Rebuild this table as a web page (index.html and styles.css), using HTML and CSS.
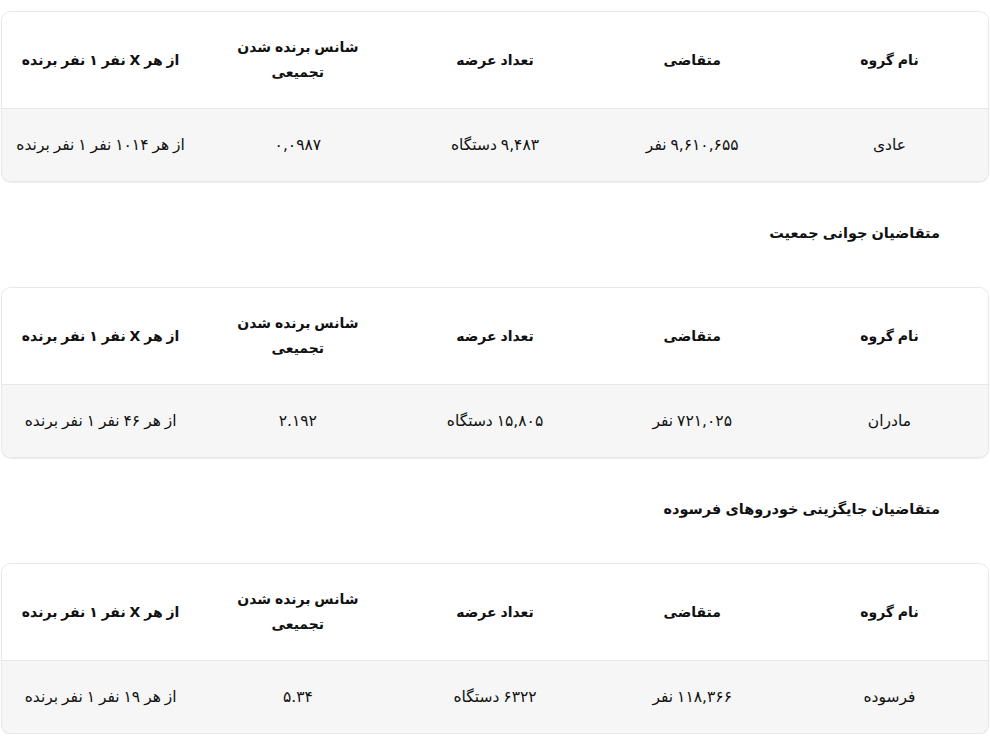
FILE: index.html
```html
<!DOCTYPE html>
<html lang="fa" dir="rtl">
<head>
<meta charset="utf-8">
<title>جدول شانس برنده شدن</title>
<link rel="stylesheet" href="styles.css">
</head>
<body>
<main class="page">
  <div class="card">
    <table class="tbl">
      <thead>
        <tr>
          <th>نام گروه</th>
          <th>متقاضی</th>
          <th>تعداد عرضه</th>
          <th>شانس برنده شدن<br>تجمیعی</th>
          <th>از هر X نفر ۱ نفر برنده</th>
        </tr>
      </thead>
      <tbody>
        <tr>
          <td>عادی</td>
          <td>۹,۶۱۰,۶۵۵ نفر</td>
          <td>۹,۴۸۳ دستگاه</td>
          <td>۰,۰۹۸۷</td>
          <td>از هر ۱۰۱۴ نفر ۱ نفر برنده</td>
        </tr>
      </tbody>
    </table>
  </div>

  <h3 class="section-title">متقاضیان جوانی جمعیت</h3>

  <div class="card">
    <table class="tbl">
      <thead>
        <tr>
          <th>نام گروه</th>
          <th>متقاضی</th>
          <th>تعداد عرضه</th>
          <th>شانس برنده شدن<br>تجمیعی</th>
          <th>از هر X نفر ۱ نفر برنده</th>
        </tr>
      </thead>
      <tbody>
        <tr>
          <td>مادران</td>
          <td>۷۲۱,۰۲۵ نفر</td>
          <td>۱۵,۸۰۵ دستگاه</td>
          <td>۲.۱۹۲</td>
          <td>از هر ۴۶ نفر ۱ نفر برنده</td>
        </tr>
      </tbody>
    </table>
  </div>

  <h3 class="section-title">متقاضیان جایگزینی خودروهای فرسوده</h3>

  <div class="card">
    <table class="tbl">
      <thead>
        <tr>
          <th>نام گروه</th>
          <th>متقاضی</th>
          <th>تعداد عرضه</th>
          <th>شانس برنده شدن<br>تجمیعی</th>
          <th>از هر X نفر ۱ نفر برنده</th>
        </tr>
      </thead>
      <tbody>
        <tr>
          <td>فرسوده</td>
          <td>۱۱۸,۳۶۶ نفر</td>
          <td>۶۳۲۲ دستگاه</td>
          <td>۵.۳۴</td>
          <td>از هر ۱۹ نفر ۱ نفر برنده</td>
        </tr>
      </tbody>
    </table>
  </div>
</main>
</body>
</html>
```

FILE: styles.css
```css
html, body {
  margin: 0;
  padding: 0;
  background: #ffffff;
}

body {
  font-family: "DejaVu Sans", "Noto Sans", sans-serif;
  color: #111111;
}

.page {
  padding: 11px 1px 0 1px;
  display: flex;
  flex-direction: column;
}

.card {
  border: 1px solid #e6e8eb;
  border-radius: 10px;
  overflow: hidden;
  box-shadow: 0 1px 1px rgba(0, 0, 0, 0.08);
  background: #ffffff;
}

.tbl {
  width: 100%;
  border-collapse: collapse;
  table-layout: fixed;
}

.tbl th {
  font-weight: bold;
  font-size: 14px;
  line-height: 25px;
  word-spacing: -1px;
  height: 96px;
  padding: 0 8px;
  text-align: center;
  vertical-align: middle;
  border-bottom: 1px solid #e6e8eb;
  background: #ffffff;
}

.tbl td {
  font-size: 15.5px;
  line-height: 24px;
  word-spacing: -1px;
  height: 72px;
  padding: 0 8px;
  text-align: center;
  vertical-align: middle;
  background: #f6f6f6;
}

.section-title {
  margin: 39px 0 42px 0;
  padding-right: 49px;
  font-size: 14.5px;
  line-height: 24px;
  word-spacing: -1px;
  font-weight: bold;
}
```
